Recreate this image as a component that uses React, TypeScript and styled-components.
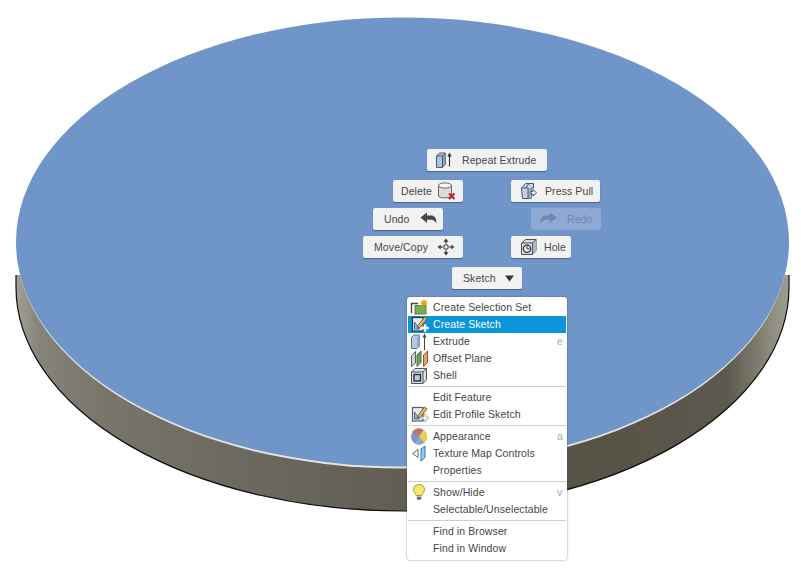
import React from "react";
import styled, {createGlobalStyle} from "styled-components";

const Global = createGlobalStyle`
  html, body {
    margin: 0;
    padding: 0;
    background: #fff;
  }
  body {
    font-family: "Liberation Sans", Arial, sans-serif;
  }
`

const Stage = styled.div`
  position: relative;
  width: 801px;
  height: 573px;
  overflow: hidden;
  background: #fff;
`
const Model = styled.svg`
  position: absolute;
  left: 0;
  top: 0;
`
const MarkButton = styled.div<{ $x: number, $y: number, $w: number, $pad: number, $gap: number, $off?: boolean }>`
  position: absolute;
  left: ${p => p.$x}px;
  top: ${p => p.$y}px;
  width: ${p => p.$w}px;
  height: 22px;
  box-sizing: border-box;
  display: flex;
  align-items: center;
  gap: ${p => p.$gap}px;
  padding-left: ${p => p.$pad}px;
  border-radius: 2px;
  font-size: 10.5px;
  letter-spacing: 0.1px;
  white-space: nowrap;
  color: ${p => p.$off ? '#6f87ad' : '#474747'};
  background: ${p => p.$off ? '#8ea9d3' : '#f2f2f2'};
  box-shadow: ${p => p.$off ? 'none' : '0 1px 1px rgba(50,60,80,.55)'};
`
const Menu = styled.div`
  position: absolute;
  left: 407px;
  top: 297px;
  width: 160px;
  height: 263px;
  box-sizing: border-box;
  padding: 2px 1px;
  background: #fff;
  border-radius: 3px;
  box-shadow: 0 0 2px rgba(60,60,60,.7);
  font-size: 10.5px;
  letter-spacing: 0.1px;
  color: #464646;
`
const Row = styled.div<{ $active?: boolean }>`
  height: 17px;
  display: flex;
  align-items: center;
  white-space: nowrap;
  color: ${p => p.$active ? '#fff' : 'inherit'};
  background: ${p => p.$active ? '#0a96d8' : 'transparent'};
`
const IconSlot = styled.span`
  width: 25px;
  height: 17px;
  display: flex;
  align-items: center;
  padding-left: 2px;
  box-sizing: border-box;
  flex: none;
`
const Label = styled.span`
  flex: 1;
  height: 15px;
  line-height: 15px;
`
const Key = styled.span`
  width: 8px;
  height: 15px;
  line-height: 15px;
  margin-right: 1px;
  color: #a8a8a8;
`
const Divider = styled.div`
  height: 5px;
  display: flex;
  align-items: center;
  &::before {
    content: "";
    flex: 1;
    height: 1px;
    background: #cfcfcf;
  }
`

const Cylinder = () => (
    <Model width="801" height="573" viewBox="0 0 801 573">
        <defs>
            <linearGradient id="side" x1="16" y1="0" x2="789" y2="0" gradientUnits="userSpaceOnUse">
                <stop offset="0" stopColor="#a3a194"/>
                <stop offset="0.03" stopColor="#85837a"/>
                <stop offset="0.12" stopColor="#777569"/>
                <stop offset="0.4" stopColor="#65635a"/>
                <stop offset="0.75" stopColor="#565246"/>
                <stop offset="0.92" stopColor="#5d594e"/>
                <stop offset="0.975" stopColor="#8c8a7c"/>
                <stop offset="1" stopColor="#a09e90"/>
            </linearGradient>
        </defs>
        <path d="M16 275 V287 A386.5 224 0 0 0 789 287 V275 Z" fill="url(#side)"/>
        <path d="M16 275 V287 A386.5 224 0 0 0 789 287 V275" fill="none" stroke="#0c0c0c" strokeWidth="1.2"/>
        <ellipse cx="402.5" cy="244" rx="386" ry="224.5" fill="#e4e4e0"/>
        <ellipse cx="402.5" cy="242" rx="386.5" ry="224.5" fill="#6f95c9"/>
    </Model>
)

const Extrude = () => (
    <svg width="18" height="18" viewBox="0 0 18 18">
        <path d="M1.5 5 L4.5 2 H10.5 V13.5 L7.5 16.5 H1.5 Z" fill="#a9c3e2" stroke="#55585e" strokeWidth="1"/>
        <path d="M7.5 5 L10.5 2 V13.5 L7.5 16.5 Z" fill="#7fa2cd"/>
        <path d="M1.5 5 H7.5 V16.5 M7.5 5 L10.5 2" fill="none" stroke="#55585e" strokeWidth="1"/>
        <path d="M14.5 15.5 V3" stroke="#333" strokeWidth="1.1"/>
        <path d="M12.3 5.5 L14.5 1.5 L16.7 5.5 Z" fill="#333"/>
    </svg>
)
const TrashCylinder = () => (
    <svg width="18" height="18" viewBox="0 0 18 18">
        <path d="M0.5 3.5 V14 C0.5 16.5 12.5 16.5 13.5 14 V3.5" fill="#dcdcdc" stroke="#666" strokeWidth="1"/>
        <ellipse cx="7" cy="3.5" rx="6.5" ry="2.6" fill="#f4f4f4" stroke="#666" strokeWidth="1"/>
        <path d="M11 11.5 L16.5 17 M16.5 11.5 L11 17" stroke="#c2281e" strokeWidth="2.2"/>
    </svg>
)
const PressPull = () => (
    <svg width="18" height="18" viewBox="0 0 18 18">
        <path d="M1.5 6 L5.5 1.5 H13.5 V6 H11.5 V16.5 H2.5 Z" fill="#c3d4e9" stroke="#55585e" strokeWidth="1"/>
        <path d="M8 6 H11.5 V16.5 H8 Z" fill="#8fb0d6"/>
        <path d="M5.5 6 L9 1.5 M1.5 6 H8 V16.5" fill="none" stroke="#55585e" strokeWidth="1"/>
        <path d="M11 9.5 H13 V7.5 L16.5 10.8 L13 14 V12 H11 Z" fill="#f8f8f8" stroke="#44474c" strokeWidth=".9"/>
    </svg>
)
const UndoArrow = ({flip}: { flip?: boolean }) => (
    <svg width="17" height="14" viewBox="0 0 17 14" style={flip ? {transform: 'scaleX(-1)'} : undefined}>
        <path d="M0.5 5.5 L7 0.5 V3.5 H11 C14.5 3.5 16.5 6 16.5 11.5 C15 9 13.5 7.8 11 7.8 H7 V11 Z" fill={flip ? '#6f87ad' : '#45474b'}/>
    </svg>
)
const MoveCopy = () => (
    <svg width="18" height="18" viewBox="0 0 18 18" fill="#45474b">
        <circle cx="9" cy="9" r="2.2" fill="none" stroke="#45474b" strokeWidth="1.1"/>
        <path d="M9 0.5 L11.6 3.7 H9.8 V5.5 H8.2 V3.7 H6.4 Z M9 17.5 L11.6 14.3 H9.8 V12.5 H8.2 V14.3 H6.4 Z"/>
        <path d="M0.5 9 L3.7 6.4 V8.2 H5.5 V9.8 H3.7 V11.6 Z M17.5 9 L14.3 6.4 V8.2 H12.5 V9.8 H14.3 V11.6 Z"/>
    </svg>
)
const Hole = () => (
    <svg width="18" height="18" viewBox="0 0 18 18">
        <path d="M1.5 5 L5.5 1.5 H16 V12.5 L12.5 16.5 H1.5 Z" fill="#d8dbe0" stroke="#4e5156" strokeWidth="1"/>
        <path d="M12.5 5 L16 1.5 V12.5 L12.5 16.5 Z" fill="#a8bcd4"/>
        <path d="M1.5 5 H12.5 V16.5 M12.5 5 L16 1.5" fill="none" stroke="#4e5156" strokeWidth="1"/>
        <circle cx="7" cy="10.8" r="3.6" fill="#f4f4f4" stroke="#33363a" strokeWidth="1.3"/>
        <path d="M7 8 V10.8 H9.5" fill="none" stroke="#33363a" strokeWidth="1"/>
    </svg>
)
const DownTriangle = () => (
    <svg width="9" height="7" viewBox="0 0 9 7">
        <path d="M0 0.5 H9 L4.5 6.5 Z" fill="#333"/>
    </svg>
)
const SelectionSet = () => (
    <svg width="20" height="17" viewBox="0 0 20 17">
        <path d="M1.5 14 V4.5 H8" fill="none" stroke="#44474a" strokeWidth="1.4"/>
        <rect x="5" y="6.5" width="11" height="8.5" fill="#7cab4e" stroke="#5a7f3a" strokeWidth="1"/>
        <path d="M14 0 L14.9 1.9 L17 1 L16.1 3 L18 4 L16.1 4.9 L17 7 L14.9 6.1 L14 8 L13.1 6.1 L11 7 L11.9 4.9 L10 4 L11.9 3 L11 1 L13.1 1.9 Z" fill="#f2a021"/>
    </svg>
)
const SketchIcon = ({active}: { active?: boolean }) => (
    <svg width="20" height="17" viewBox="0 0 20 17">
        <rect x="2.5" y="1.5" width="10.5" height="13.5" fill="#e4ebf5" stroke={active ? '#27365a' : '#565b63'} strokeWidth="1.2"/>
        <path d="M4.5 13 V6 L9.5 13 Z" fill="#8fb0d6" stroke="#44556f" strokeWidth=".8"/>
        <path d="M8 9.5 L14.5 1 L17 3 L10.5 11 L7.5 12 Z" fill="#f0b64a" stroke="#4b4a45" strokeWidth=".8"/>
        <path d="M11.5 11 H14 V8.5 H16 V11 H18.5 V13 H16 V15.5 H14 V13 H11.5 Z" fill="#fff" stroke={active ? '#fff' : '#777'} strokeWidth=".5"/>
    </svg>
)
const ExtrudeSmall = () => (
    <svg width="20" height="17" viewBox="0 0 20 17">
        <path d="M1.5 4.5 L4 2 H9.5 V13 L7 15.5 H1.5 Z" fill="#b5c9e2" stroke="#6a6e74" strokeWidth="1"/>
        <path d="M7 4.5 L9.5 2 V13 L7 15.5 Z" fill="#8eadd2"/>
        <path d="M14.5 17 V3" stroke="#444" strokeWidth="1"/>
        <path d="M12.5 4.5 L14.5 0.5 L16.5 4.5 Z" fill="#444"/>
    </svg>
)
const OffsetPlane = () => (
    <svg width="20" height="17" viewBox="0 0 20 17">
        <path d="M1.5 5.5 L5.5 1.5 V13 L1.5 16.5 Z" fill="#d2d4cf" stroke="#5c5f5c" strokeWidth="1"/>
        <path d="M7 5 L11 1 V12.5 L7 16.5 Z" fill="#6da35a" stroke="#4f6a48" strokeWidth="1"/>
        <path d="M13.5 5 L17.5 1 V12.5 L13.5 16.5 Z" fill="#ee9f63" stroke="#8a5a3a" strokeWidth="1"/>
    </svg>
)
const Shell = () => (
    <svg width="20" height="17" viewBox="0 0 20 17">
        <path d="M1.5 5 L5 1.5 H16.5 V12.5 L13 16.5 H1.5 Z" fill="#dcdfe3" stroke="#53565b" strokeWidth="1"/>
        <path d="M1.5 5 H13 V16.5 M13 5 L16.5 1.5" fill="none" stroke="#53565b" strokeWidth="1"/>
        <rect x="4" y="7.5" width="6.5" height="6.5" fill="#b6cbe6" stroke="#2d3035" strokeWidth="1.4"/>
    </svg>
)
const Appearance = () => (
    <svg width="20" height="17" viewBox="0 0 20 17">
        <circle cx="9" cy="8.5" r="8" fill="#7f97c0"/>
        <path d="M9 8.5 L2.5 3.8 A8 8 0 0 1 13.5 1.9 Z" fill="#c1736f"/>
        <path d="M9 8.5 L13.5 1.9 A8 8 0 0 1 14 14.8 Z" fill="#efce4c"/>
        <path d="M9 8.5 L14 14.8 A8 8 0 0 1 5 15.4 Z" fill="#8ba6cf"/>
    </svg>
)
const TextureMap = () => (
    <svg width="20" height="17" viewBox="0 0 20 17">
        <path d="M2.5 8.5 L8 4.5 V12.5 Z" fill="#fff" stroke="#666" strokeWidth="1"/>
        <path d="M11 4 L15 1 V12.5 L11 16 Z" fill="#9cc8ea" stroke="#2f79b5" strokeWidth="1"/>
    </svg>
)
const Bulb = () => (
    <svg width="20" height="17" viewBox="0 0 20 17">
        <path d="M9 0.5 C5.5 0.5 3.5 3 3.5 5.5 C3.5 8 5.5 9 6.2 11.5 H11.8 C12.5 9 14.5 8 14.5 5.5 C14.5 3 12.5 0.5 9 0.5 Z" fill="#f5e96e" stroke="#a79a3a" strokeWidth="1"/>
        <path d="M6.7 12.5 H11.3 V14.5 L10 16 H8 L6.7 14.5 Z" fill="#77776f"/>
    </svg>
)

const App = () => (
    <Stage>
        <Global/>
        <Cylinder/>
        <MarkButton $x={427} $y={149} $w={120} $pad={8} $gap={9}><Extrude/>Repeat Extrude</MarkButton>
        <MarkButton $x={393} $y={180} $w={70} $pad={8} $gap={6}>Delete<TrashCylinder/></MarkButton>
        <MarkButton $x={511} $y={180} $w={89} $pad={9} $gap={7}><PressPull/>Press Pull</MarkButton>
        <MarkButton $x={373} $y={208} $w={70} $pad={11} $gap={10}>Undo<UndoArrow/></MarkButton>
        <MarkButton $x={531} $y={208} $w={70} $pad={9} $gap={10} $off><UndoArrow flip/>Redo</MarkButton>
        <MarkButton $x={363} $y={236} $w={100} $pad={11} $gap={9}>Move/Copy<MoveCopy/></MarkButton>
        <MarkButton $x={511} $y={236} $w={60} $pad={9} $gap={6}><Hole/>Hole</MarkButton>
        <MarkButton $x={452} $y={267} $w={70} $pad={11} $gap={9}>Sketch<DownTriangle/></MarkButton>
        <Menu>
            <Row><IconSlot><SelectionSet/></IconSlot><Label>Create Selection Set</Label></Row>
            <Row $active><IconSlot><SketchIcon active/></IconSlot><Label>Create Sketch</Label></Row>
            <Row><IconSlot><ExtrudeSmall/></IconSlot><Label>Extrude</Label><Key>e</Key></Row>
            <Row><IconSlot><OffsetPlane/></IconSlot><Label>Offset Plane</Label></Row>
            <Row><IconSlot><Shell/></IconSlot><Label>Shell</Label></Row>
            <Divider/>
            <Row><IconSlot/><Label>Edit Feature</Label></Row>
            <Row><IconSlot><SketchIcon/></IconSlot><Label>Edit Profile Sketch</Label></Row>
            <Divider/>
            <Row><IconSlot><Appearance/></IconSlot><Label>Appearance</Label><Key>a</Key></Row>
            <Row><IconSlot><TextureMap/></IconSlot><Label>Texture Map Controls</Label></Row>
            <Row><IconSlot/><Label>Properties</Label></Row>
            <Divider/>
            <Row><IconSlot><Bulb/></IconSlot><Label>Show/Hide</Label><Key>v</Key></Row>
            <Row><IconSlot/><Label>Selectable/Unselectable</Label></Row>
            <Divider/>
            <Row><IconSlot/><Label>Find in Browser</Label></Row>
            <Row><IconSlot/><Label>Find in Window</Label></Row>
        </Menu>
    </Stage>
)

export default App;
